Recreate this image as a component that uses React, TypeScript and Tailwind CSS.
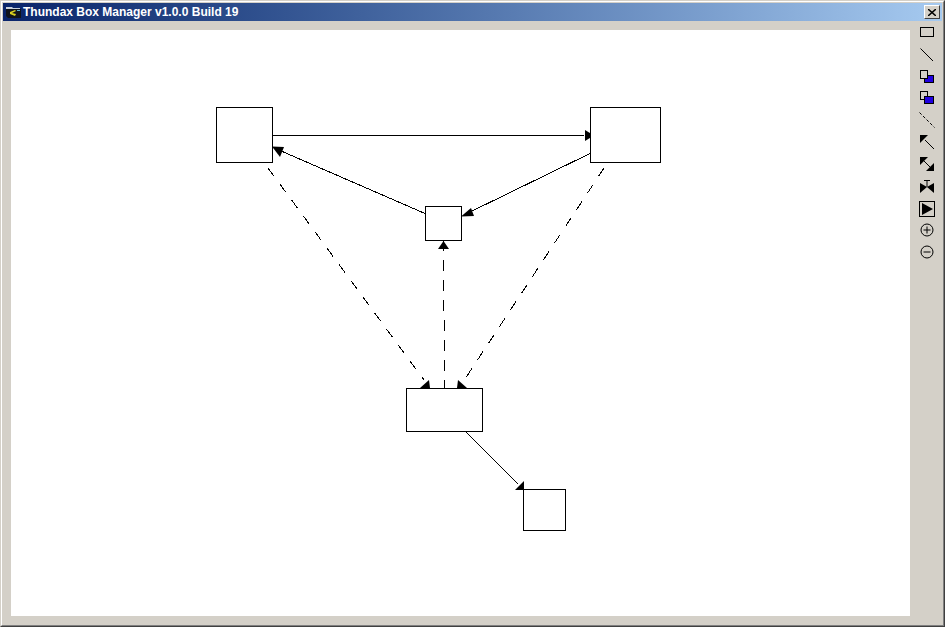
const boxes = [
  { id: "a", cls: "left-[205px] top-[77px] w-[57px] h-[56px]" },
  { id: "b", cls: "left-[579px] top-[77px] w-[71px] h-[56px]" },
  { id: "c", cls: "left-[414px] top-[176px] w-[37px] h-[35px]" },
  { id: "d", cls: "left-[395px] top-[358px] w-[77px] h-[44px]" },
  { id: "e", cls: "left-[512px] top-[459px] w-[43px] h-[42px]" },
];

function Diagram() {
  return (
    <svg className="absolute left-0 top-0 w-[899px] h-[586px]" viewBox="11 30 899 586" shapeRendering="crispEdges">
      <g stroke="#000" strokeWidth="1" fill="none">
        <path d="M273 135.5H584" />
        <path d="M590 153.5L468 213" />
        <path d="M425 213.5L280 150.5" />
        <path d="M466 432L518 484" />
        <path d="M268 168L424 380" strokeDasharray="10 10" />
        <path d="M604 168L463 382" strokeDasharray="10 10" />
        <path d="M443.5 240L444.5 388" strokeDasharray="11 9" />
      </g>
      <g fill="#000" shapeRendering="auto">
        <polygon points="594,135.5 585,130 585,141" />
        <polygon points="461,216.5 471,208 474,216" />
        <polygon points="272,146.5 284,147 280,157" />
        <polygon points="524,481 524,490 515,490" />
        <polygon points="430,388 420,388 429,380" />
        <polygon points="457,388 467,388 458,380" />
        <polygon points="443.5,241 438,249 449,249" />
      </g>
    </svg>
  );
}

function AppIcon() {
  return (
    <svg width="15" height="13" viewBox="0 0 15 13" className="shrink-0">
      <path d="M0 1h6l1 1h7v2H0z" fill="#c8d0dc" />
      <path d="M0 3h15v9H2L0 10z" fill="#10141c" />
      <path d="M4 6l5-2 1 1-4 2 4 1-1 2-5-2z" fill="#d8d020" />
      <path d="M11 4h3v1h-3z" fill="#60b0d0" />
    </svg>
  );
}

const ICON = "block";

const tools = [
  {
    h: "h-[22px]",
    icon: (
      <svg width="16" height="12" className={ICON}>
        <rect x="1.5" y="1.5" width="13" height="9" fill="none" stroke="#000" />
      </svg>
    ),
  },
  {
    h: "h-[24px]",
    icon: (
      <svg width="16" height="16" className={ICON}>
        <path d="M1.5 1.5L14 14" stroke="#000" fill="none" />
      </svg>
    ),
  },
  {
    h: "h-[20px]",
    icon: (
      <svg width="16" height="14" className={ICON}>
        <rect x="5.5" y="5.5" width="9" height="7" fill="#2000e0" stroke="#000" />
        <rect x="1.5" y="0.5" width="7" height="8" fill="#d4d0c8" stroke="#000" />
      </svg>
    ),
  },
  {
    h: "h-[22px]",
    icon: (
      <svg width="16" height="14" className={ICON}>
        <rect x="1.5" y="0.5" width="7" height="8" fill="#d4d0c8" stroke="#000" />
        <rect x="5.5" y="5.5" width="9" height="7" fill="#2000e0" stroke="#000" />
      </svg>
    ),
  },
  {
    h: "h-[22px]",
    icon: (
      <svg width="18" height="18" className={ICON}>
        <path d="M1.5 1.5L16.5 16.5" stroke="#000" strokeDasharray="3 2" fill="none" />
      </svg>
    ),
  },
  {
    h: "h-[22px]",
    icon: (
      <svg width="16" height="16" className={ICON}>
        <path d="M6 6L15 15" stroke="#000" fill="none" />
        <polygon points="1,1 9,1 1,9" fill="#000" />
      </svg>
    ),
  },
  {
    h: "h-[22px]",
    icon: (
      <svg width="16" height="16" className={ICON}>
        <path d="M4 4L12 12" stroke="#000" fill="none" />
        <polygon points="1,1 9,1 1,9" fill="#000" />
        <polygon points="15,15 7,15 15,7" fill="#000" />
      </svg>
    ),
  },
  {
    h: "h-[24px]",
    icon: (
      <svg width="16" height="14" className={ICON}>
        <path d="M5 0.5H11M8 0.5V7" stroke="#000" fill="none" />
        <polygon points="1,3 8,7 1,13" fill="#000" />
        <polygon points="15,3 8,7 15,13" fill="#000" />
      </svg>
    ),
  },
  {
    h: "h-[20px]",
    icon: (
      <svg width="16" height="16" className={ICON}>
        <rect x="0.5" y="0.5" width="15" height="15" fill="none" stroke="#000" strokeWidth="1" />
        <polygon points="3,2 14,8 3,14" fill="#000" />
      </svg>
    ),
  },
  {
    h: "h-[22px]",
    icon: (
      <svg width="14" height="14" className={ICON}>
        <circle cx="7" cy="7" r="6" fill="none" stroke="#000" />
        <path d="M3.5 7H10.5M7 3.5V10.5" stroke="#000" />
      </svg>
    ),
  },
  {
    h: "h-[22px]",
    icon: (
      <svg width="14" height="14" className={ICON}>
        <circle cx="7" cy="7" r="6" fill="none" stroke="#000" />
        <path d="M3.5 7H10.5" stroke="#000" />
      </svg>
    ),
  },
];

export default function App() {
  return (
    <div className="w-[945px] h-[627px] overflow-hidden border border-t-[#d4d0c8] border-l-[#d4d0c8] border-r-[#404040] border-b-[#404040] bg-[#d4d0c8]">
      <div className="h-full flex flex-col border border-t-white border-l-white border-r-[#808080] border-b-[#808080] p-px">
        <div className="h-[18px] shrink-0 flex items-center pl-[3px] pr-[2px] bg-gradient-to-r from-[#0a246a] to-[#a6caf0]">
          <AppIcon />
          <span className="ml-[2px] text-white font-bold text-[12px] leading-none whitespace-nowrap font-['Liberation_Sans',sans-serif]">
            Thundax Box Manager v1.0.0 Build 19
          </span>
          <button className="ml-auto w-[16px] h-[14px] flex items-center justify-center bg-[#d4d0c8] border border-t-white border-l-white border-r-[#404040] border-b-[#404040]">
            <svg width="8" height="7" viewBox="0 0 8 7">
              <path d="M0 0L8 7M8 0L0 7" stroke="#000" strokeWidth="1.5" fill="none" />
            </svg>
          </button>
        </div>
        <div className="flex-1 flex min-h-0">
          <div className="ml-[8px] mt-[9px] mb-[8px] w-[899px] relative bg-white">
            <Diagram />
            {boxes.map((b) => (
              <div key={b.id} className={`absolute border border-black bg-white ${b.cls}`} />
            ))}
          </div>
          <div className="flex-1 flex flex-col items-center pl-[2px]">
            {tools.map((t, i) => (
              <div key={i} className={`${t.h} flex items-center justify-center`}>
                {t.icon}
              </div>
            ))}
          </div>
        </div>
      </div>
    </div>
  );
}
